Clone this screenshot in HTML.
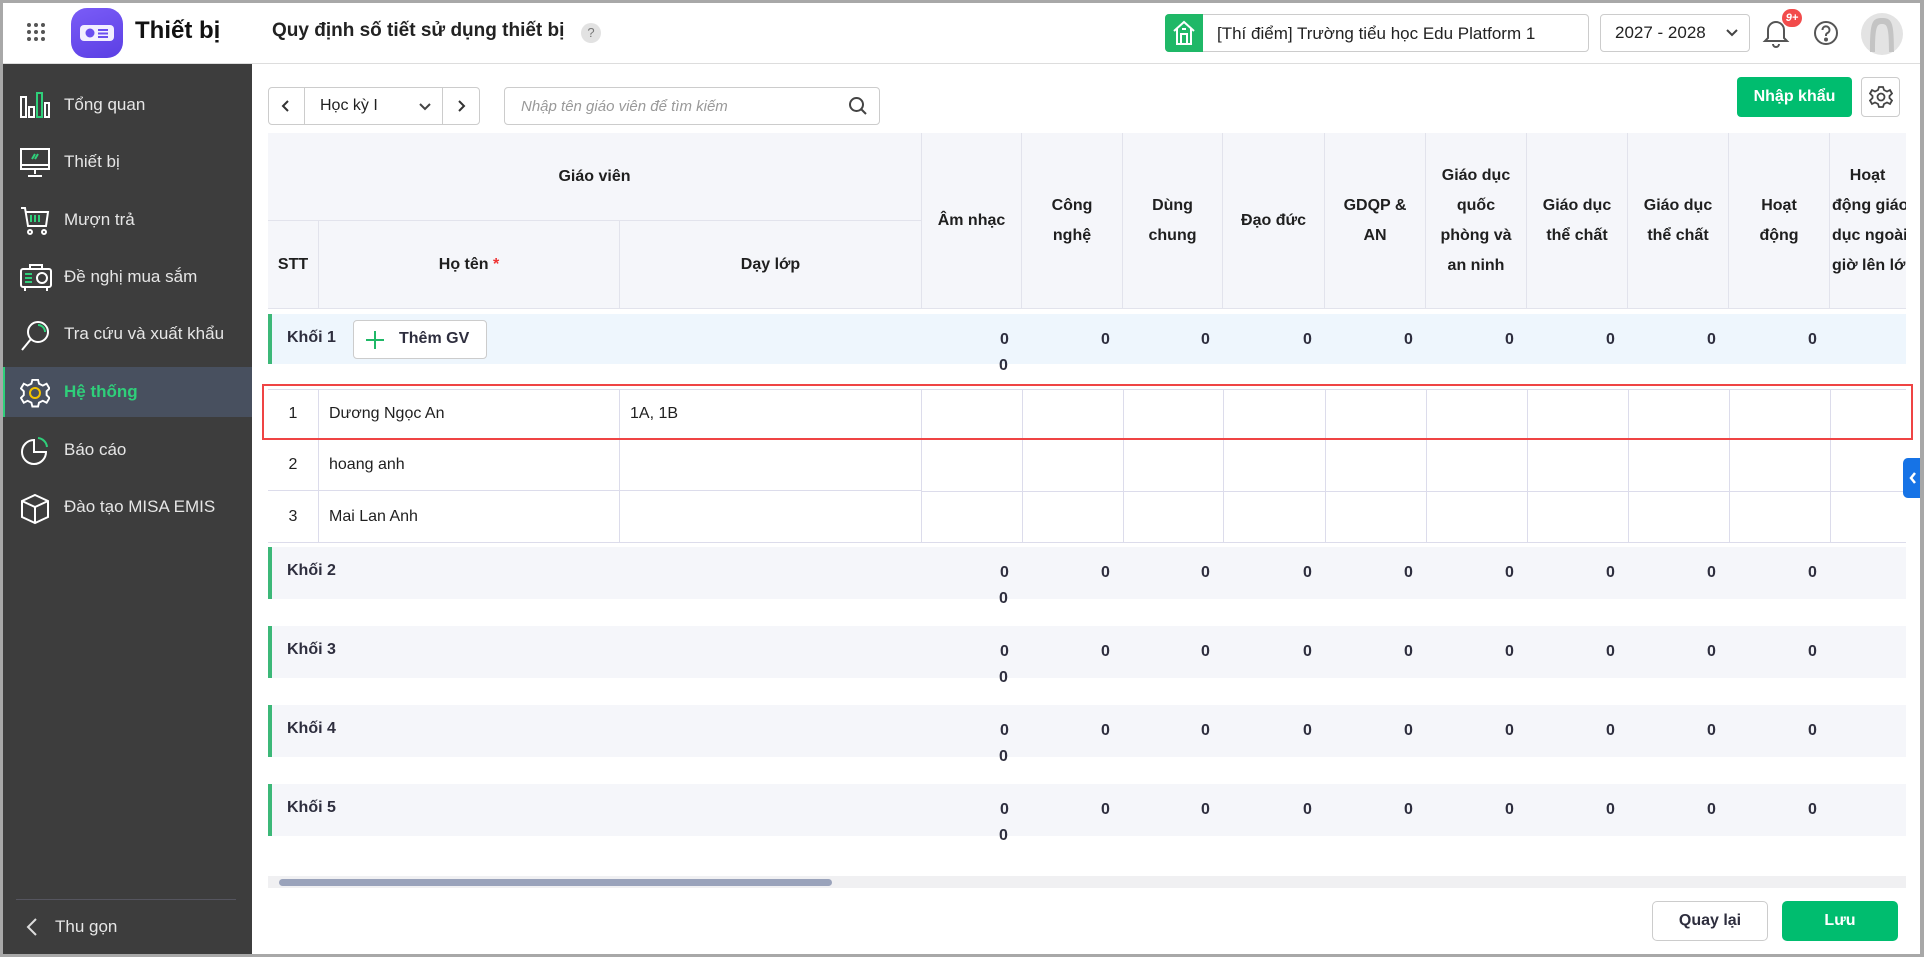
<!DOCTYPE html>
<html><head><meta charset="utf-8">
<style>
*{box-sizing:border-box;margin:0;padding:0}
body{width:1924px;height:957px;overflow:hidden;font-family:"Liberation Sans",sans-serif;background:#fff;position:relative;color:#1f1f1f}
.abs{position:absolute}
#frame{position:absolute;left:0;top:0;width:1924px;height:957px;border:3px solid #a8a8a8;border-right-width:4px;pointer-events:none;z-index:50}
.side{left:0;top:64px;width:252px;height:893px;background:#3d3d3d}
.si{position:absolute;left:0;width:252px;height:50px;color:#e6e6e6;font-size:17px;display:flex;align-items:center;padding-left:64px}
.si svg{position:absolute;left:20px;top:11px}
.hdr{background:#f5f6fa;border-right:1px solid #e2e3ec;border-bottom:1px solid #e2e3ec;font-weight:bold;font-size:16px;display:flex;align-items:center;justify-content:center;text-align:center;line-height:30px;color:#1f1f1f}
.cell{border-right:1px solid #dcdceb;border-bottom:1px solid #dcdceb;font-size:16px;display:flex;align-items:center}
.grp{left:268px;width:1638px;height:52px;background:#f5f6fa}
.grp .bar{position:absolute;left:0;top:0;width:4px;height:100%;background:#3cb878}
.grp .t{position:absolute;left:19px;top:15px;font-weight:bold;font-size:16px;color:#2e2e3e}
.z{position:absolute;font-size:16px;font-weight:bold;color:#2e2e3e}
</style></head><body>
<div id="frame"></div>
<div class="abs" style="left:0;top:0;width:1924px;height:64px;border-bottom:1px solid #ddd;background:#fff"></div>
<svg class="abs" style="left:26px;top:22px" width="20" height="20"><g fill="#555"><circle cx="3" cy="3" r="2"/><circle cx="10" cy="3" r="2"/><circle cx="17" cy="3" r="2"/><circle cx="3" cy="10" r="2"/><circle cx="10" cy="10" r="2"/><circle cx="17" cy="10" r="2"/><circle cx="3" cy="17" r="2"/><circle cx="10" cy="17" r="2"/><circle cx="17" cy="17" r="2"/></g></svg>
<div class="abs" style="left:71px;top:8px;width:52px;height:50px;border-radius:16px;background:linear-gradient(160deg,#7a5cf7,#5b3fe4)"></div>
<svg class="abs" style="left:78px;top:22px" width="38" height="22"><rect x="2" y="3" width="34" height="16" rx="4" fill="#f2eeff"/><circle cx="12" cy="11" r="4.5" fill="#6a4df0"/><rect x="20" y="7" width="10" height="2" fill="#6a4df0"/><rect x="20" y="10.5" width="10" height="2" fill="#6a4df0"/><rect x="20" y="14" width="10" height="2" fill="#6a4df0"/></svg>
<div class="abs" style="left:135px;top:17px;font-size:24px;font-weight:bold;color:#111">Thiết bị</div>
<div class="abs" style="left:272px;top:20px;font-size:19px;font-weight:bold;color:#222">Quy định số tiết sử dụng thiết bị</div>
<div class="abs" style="left:581px;top:23px;width:20px;height:20px;border-radius:10px;background:#e2e2e2;color:#777;font-size:13px;text-align:center;line-height:20px">?</div>
<div class="abs" style="left:1165px;top:14px;width:424px;height:38px;border:1px solid #ccc;border-radius:4px;background:#fff"></div>
<div class="abs" style="left:1165px;top:14px;width:38px;height:38px;background:#1fb867;border-radius:4px 0 0 4px"></div>
<svg class="abs" style="left:1172px;top:20px" width="24" height="26" fill="none" stroke="#fff" stroke-width="2"><path d="M2 11 L12 2 L22 11 M5 9 V24 H19 V9 M9 24 V14 H15 V24 M10 9 H14"/></svg>
<div class="abs" style="left:1217px;top:24px;font-size:17px;color:#222">[Thí điểm] Trường tiểu học Edu Platform 1</div>
<div class="abs" style="left:1600px;top:14px;width:150px;height:38px;border:1px solid #ccc;border-radius:4px"></div>
<div class="abs" style="left:1615px;top:23px;font-size:17px;color:#222">2027 - 2028</div>
<svg class="abs" style="left:1725px;top:28px" width="14" height="10" fill="none" stroke="#444" stroke-width="2"><path d="M2 2 L7 7 L12 2"/></svg>
<svg class="abs" style="left:1762px;top:16px" width="30" height="32" fill="none" stroke="#555" stroke-width="2"><path d="M6 22 V14 a8 8 0 0 1 16 0 V22 L25 25 H3 Z M11 28 a3 3 0 0 0 6 0"/></svg>
<div class="abs" style="left:1782px;top:9px;width:20px;height:18px;border-radius:9px;background:#f24b4b;color:#fff;font-size:11px;font-style:italic;font-weight:bold;text-align:center;line-height:18px">9+</div>
<svg class="abs" style="left:1813px;top:20px" width="26" height="26" fill="none" stroke="#555" stroke-width="2"><circle cx="13" cy="13" r="11"/><path d="M9.5 10 a3.5 3.5 0 1 1 5 3 c-1.5 .8 -1.5 1.5 -1.5 3"/><circle cx="13" cy="19.5" r="1" fill="#555"/></svg>
<svg class="abs" style="left:1860px;top:12px" width="44" height="44"><circle cx="22" cy="22" r="21" fill="#e3e3e3"/><path d="M10 40 C10 10 12 6 22 6 C32 6 34 10 34 40 L29 40 C29 14 27 12 22 12 C17 12 15 14 15 40 Z" fill="#c4c4c4"/></svg>

<div class="abs side"></div>
<div class="si" style="top:80px"><svg width="30" height="28" fill="none" stroke="#fff" stroke-width="2"><rect x="1" y="6" width="5" height="20"/><rect x="9" y="16" width="5" height="10"/><rect x="17" y="2" width="5" height="24" stroke="#2fcf7a"/><rect x="25" y="12" width="4" height="14"/></svg>Tổng quan</div>
<div class="si" style="top:137px"><svg width="30" height="30" fill="none" stroke="#fff" stroke-width="2"><rect x="1" y="1" width="28" height="20"/><path d="M1 17 H29 M15 21 V26 M8 28 H22"/><path d="M12 11 L15 6 M15 11 L18 6" stroke="#2fcf7a"/></svg>Thiết bị</div>
<div class="si" style="top:195px"><svg width="30" height="30" fill="none" stroke="#fff" stroke-width="2"><path d="M1 2 H5 L8 20 H26 L28 6 H6"/><path d="M11 9 V16 M15 9 V16 M19 9 V16" stroke="#2fcf7a"/><circle cx="10" cy="26" r="2"/><circle cx="24" cy="26" r="2"/></svg>Mượn trả</div>
<div class="si" style="top:252px"><svg width="32" height="30" fill="none" stroke="#fff" stroke-width="2"><rect x="1" y="6" width="30" height="18" rx="2"/><circle cx="22" cy="15" r="5"/><path d="M5 11 H12 M5 15 H12 M5 19 H12" stroke="#2fcf7a"/><path d="M5 24 V28 M27 24 V28 M10 6 V2 H22 V6"/></svg>Đề nghị mua sắm</div>
<div class="si" style="top:309px"><svg width="30" height="32" fill="none" stroke="#fff" stroke-width="2"><circle cx="18" cy="12" r="10"/><path d="M11 19 L2 30"/><path d="M18 5 a7 7 0 0 1 7 7" stroke="#2fcf7a"/></svg>Tra cứu và xuất khẩu</div>
<div class="abs" style="left:0;top:367px;width:252px;height:50px;background:#48505f;border-left:5px solid #2fcf7a"></div>
<div class="si" style="top:367px;color:#2fcf7a;font-weight:bold"><svg width="30" height="30" fill="none" stroke="#fff" stroke-width="2"><path d="M12 1 H18 L19 5 L23 7 L27 5 L30 10 L27 13 V17 L30 20 L27 25 L23 23 L19 25 L18 29 H12 L11 25 L7 23 L3 25 L0 20 L3 17 V13 L0 10 L3 5 L7 7 L11 5 Z" transform="scale(.95) translate(1 1)"/><circle cx="15" cy="15" r="5" stroke="#f2c200"/></svg>Hệ thống</div>
<div class="si" style="top:425px"><svg width="30" height="30" fill="none" stroke="#fff" stroke-width="2"><path d="M14 4 a12 12 0 1 0 12 12 H14 Z"/><path d="M18 2 a10 10 0 0 1 9 9" stroke="#2fcf7a"/></svg>Báo cáo</div>
<div class="si" style="top:482px"><svg width="30" height="32" fill="none" stroke="#fff" stroke-width="2"><path d="M15 2 L28 8 V24 L15 30 L2 24 V8 Z M2 8 L15 14 L28 8 M15 14 V30"/></svg>Đào tạo MISA EMIS</div>
<div class="abs" style="left:16px;top:899px;width:220px;height:1px;background:#55555f"></div>
<svg class="abs" style="left:26px;top:917px" width="12" height="20" fill="none" stroke="#ddd" stroke-width="2"><path d="M10 2 L2 10 L10 18"/></svg>
<div class="abs" style="left:55px;top:917px;font-size:17px;color:#e6e6e6">Thu gọn</div>

<div class="abs" style="left:268px;top:87px;width:212px;height:38px;border:1px solid #ccc;border-radius:4px"></div>
<div class="abs" style="left:304px;top:87px;width:1px;height:38px;background:#ccc"></div>
<div class="abs" style="left:442px;top:87px;width:1px;height:38px;background:#ccc"></div>
<svg class="abs" style="left:281px;top:99px" width="10" height="14" fill="none" stroke="#333" stroke-width="2"><path d="M7 2 L2 7 L7 12"/></svg>
<svg class="abs" style="left:456px;top:99px" width="10" height="14" fill="none" stroke="#333" stroke-width="2"><path d="M3 2 L8 7 L3 12"/></svg>
<div class="abs" style="left:320px;top:97px;font-size:16px">Học kỳ I</div>
<svg class="abs" style="left:418px;top:102px" width="14" height="10" fill="none" stroke="#444" stroke-width="2"><path d="M2 2 L7 7 L12 2"/></svg>
<div class="abs" style="left:504px;top:87px;width:376px;height:38px;border:1px solid #ccc;border-radius:4px"></div>
<div class="abs" style="left:521px;top:98px;font-size:15px;font-style:italic;color:#999">Nhập tên giáo viên để tìm kiếm</div>
<svg class="abs" style="left:848px;top:96px" width="20" height="20" fill="none" stroke="#444" stroke-width="2"><circle cx="8.5" cy="8.5" r="6.5"/><path d="M13.5 13.5 L18 18"/></svg>
<div class="abs" style="left:1737px;top:77px;width:115px;height:40px;background:#00bd6f;border-radius:4px;color:#fff;font-weight:bold;font-size:16px;text-align:center;line-height:40px">Nhập khẩu</div>
<div class="abs" style="left:1861px;top:77px;width:39px;height:40px;border:1px solid #ccc;border-radius:4px"></div>
<svg class="abs" style="left:1869px;top:85px" width="24" height="24" fill="none" stroke="#444" stroke-width="1.8"><path d="M10 2 H14 L15 5 L18 6.5 L21 5 L23 8.5 L20.5 11 V13 L23 15.5 L21 19 L18 17.5 L15 19 L14 22 H10 L9 19 L6 17.5 L3 19 L1 15.5 L3.5 13 V11 L1 8.5 L3 5 L6 6.5 L9 5 Z"/><circle cx="12" cy="12" r="3.5"/></svg>

<div class="abs hdr" style="left:268px;top:133px;width:654px;height:88px">Giáo viên</div>
<div class="abs hdr" style="left:268px;top:221px;width:51px;height:88px">STT</div>
<div class="abs hdr" style="left:319px;top:221px;width:301px;height:88px">Họ tên&nbsp;<span style="color:#e33">*</span></div>
<div class="abs hdr" style="left:620px;top:221px;width:302px;height:88px">Dạy lớp</div>
<div class="abs hdr" style="left:922px;top:133px;width:100px;height:176px">Âm nhạc</div>
<div class="abs hdr" style="left:1022px;top:133px;width:101px;height:176px">Công<br>nghệ</div>
<div class="abs hdr" style="left:1123px;top:133px;width:100px;height:176px">Dùng<br>chung</div>
<div class="abs hdr" style="left:1223px;top:133px;width:102px;height:176px">Đạo đức</div>
<div class="abs hdr" style="left:1325px;top:133px;width:101px;height:176px">GDQP &amp;<br>AN</div>
<div class="abs hdr" style="left:1426px;top:133px;width:101px;height:176px">Giáo dục<br>quốc<br>phòng và<br>an ninh</div>
<div class="abs hdr" style="left:1527px;top:133px;width:101px;height:176px">Giáo dục<br>thể chất</div>
<div class="abs hdr" style="left:1628px;top:133px;width:101px;height:176px">Giáo dục<br>thể chất</div>
<div class="abs hdr" style="left:1729px;top:133px;width:101px;height:176px">Hoạt<br>động</div>
<div class="abs hdr" style="left:1830px;top:133px;width:76px;height:176px;overflow:hidden;border-right:none;justify-content:flex-start"><div style="white-space:nowrap;padding-left:2px;text-align:left">&nbsp;&nbsp;&nbsp;&nbsp;Hoạt<br>động giáo<br>dục ngoài<br>giờ lên lớp</div></div>

<div class="abs grp" style="top:314px;height:50px;background:#eef6fd"><div class="bar"></div><div class="t">Khối 1</div></div>
<div class="abs" style="left:353px;top:320px;width:134px;height:39px;border:1px solid #ccc;border-radius:4px;background:#fff"></div>
<svg class="abs" style="left:365px;top:330px" width="20" height="20" stroke="#1fb867" stroke-width="2"><path d="M10 1 V19 M1 10 H19"/></svg>
<div class="abs" style="left:399px;top:330px;font-weight:bold;font-size:16px;color:#2e2e3e">Thêm GV</div>
<div class="abs grp" style="top:547px"><div class="bar"></div><div class="t">Khối 2</div></div>
<div class="abs grp" style="top:626px"><div class="bar"></div><div class="t">Khối 3</div></div>
<div class="abs grp" style="top:705px"><div class="bar"></div><div class="t">Khối 4</div></div>
<div class="abs grp" style="top:784px"><div class="bar"></div><div class="t">Khối 5</div></div>

<div id="zeros"></div>

<div class="abs cell" style="left:268px;top:390px;width:51px;height:49px;justify-content:center">1</div>
<div class="abs cell" style="left:319px;top:390px;width:301px;height:49px;padding-left:10px">Dương Ngọc An</div>
<div class="abs cell" style="left:620px;top:390px;width:302px;height:49px;padding-left:10px">1A, 1B</div>
<div class="abs cell" style="left:268px;top:439px;width:51px;height:52px;justify-content:center">2</div>
<div class="abs cell" style="left:319px;top:439px;width:301px;height:52px;padding-left:10px">hoang anh</div>
<div class="abs cell" style="left:620px;top:439px;width:302px;height:52px"></div>
<div class="abs cell" style="left:268px;top:491px;width:51px;height:52px;justify-content:center">3</div>
<div class="abs cell" style="left:319px;top:491px;width:301px;height:52px;padding-left:10px">Mai Lan Anh</div>
<div class="abs cell" style="left:620px;top:491px;width:302px;height:52px"></div>
<div class="abs" style="left:268px;top:389px;width:1638px;height:1px;background:#dcdceb"></div>
<svg class="abs" style="left:922px;top:389px" width="984" height="154">
<g stroke="#dcdceb" stroke-width="1">
<line x1="0" y1="50.5" x2="984" y2="50.5"/><line x1="0" y1="102.5" x2="984" y2="102.5"/><line x1="0" y1="153.5" x2="984" y2="153.5"/>
<line x1="100.5" y1="0" x2="100.5" y2="154"/><line x1="201.5" y1="0" x2="201.5" y2="154"/><line x1="301.5" y1="0" x2="301.5" y2="154"/><line x1="403.5" y1="0" x2="403.5" y2="154"/><line x1="504.5" y1="0" x2="504.5" y2="154"/><line x1="605.5" y1="0" x2="605.5" y2="154"/><line x1="706.5" y1="0" x2="706.5" y2="154"/><line x1="807.5" y1="0" x2="807.5" y2="154"/><line x1="908.5" y1="0" x2="908.5" y2="154"/>
</g></svg>
<div class="abs" style="left:262px;top:384px;width:1651px;height:56px;border:2px solid #ef4444"></div>

<div class="abs" style="left:268px;top:876px;width:1638px;height:12px;background:#f0f0f2"></div>
<div class="abs" style="left:279px;top:879px;width:553px;height:7px;border-radius:4px;background:#9aa3bb"></div>

<div class="abs" style="left:1903px;top:458px;width:21px;height:40px;background:#1673e6;border-radius:5px 0 0 5px"></div>
<svg class="abs" style="left:1909px;top:472px" width="8" height="12" fill="none" stroke="#fff" stroke-width="2.5"><path d="M6 1 L2 6 L6 11"/></svg>

<div class="abs" style="left:1652px;top:901px;width:116px;height:40px;border:1px solid #ccc;border-radius:5px;text-align:center;line-height:38px;font-weight:bold;font-size:16px;color:#2e2e3e">Quay lại</div>
<div class="abs" style="left:1782px;top:901px;width:116px;height:40px;background:#00bd6f;border-radius:5px;text-align:center;line-height:40px;font-weight:bold;font-size:16px;color:#fff">Lưu</div>

<script>
var xs=[1022,1123,1223,1325,1426,1527,1628,1729,1830];
var ys=[331,564,643,722,801];
var h='';
ys.forEach(function(y){xs.forEach(function(x){h+='<div class="z" style="left:'+(x-22)+'px;top:'+y+'px">0</div>';});
h+='<div class="z" style="left:999px;top:'+(y+26)+'px">0</div>';});
document.getElementById('zeros').innerHTML=h;
</script>
</body></html>
